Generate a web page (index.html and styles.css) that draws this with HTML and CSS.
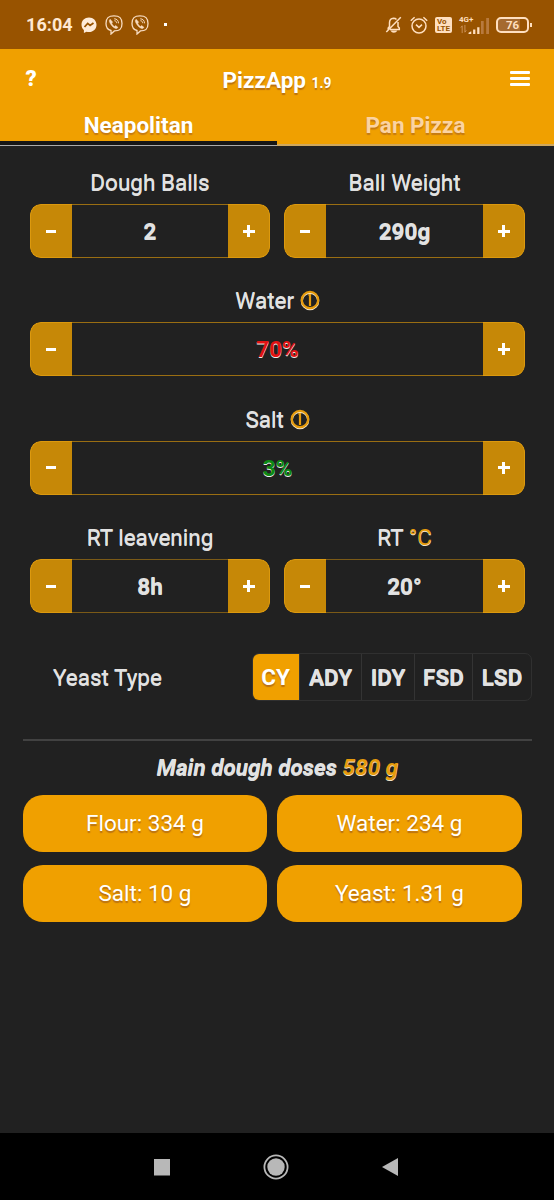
FILE: index.html
```html
<!DOCTYPE html>
<html lang="en">
<head>
<meta charset="utf-8">
<title>PizzApp</title>
<link rel="stylesheet" href="styles.css">
</head>
<body>
<div class="screen">
  <div class="status">
    <span class="clock">16:04</span>
    <svg class="messenger" width="16" height="17" viewBox="0 0 16 17"><path d="M8 .5C3.700.5.500 3.600.500 7.700c0 2.200.9 4 2.400 5.300v3l2.600-1.200c.8.2 1.600.3 2.500.3 4.300 0 7.500-3.100 7.500-7.300S12.300.5 8 .5z" fill="#ffecd9"/><path d="M3.500 10l3.200-3.600 2.400 2 3.400-2.400" fill="none" stroke="#985300" stroke-width="1.800"/></svg>
    <svg class="viber" width="18" height="20" viewBox="0 0 18 20"><use href="#viber"/></svg>
    <svg class="viber" width="18" height="20" viewBox="0 0 18 20"><g id="viber" fill="none" stroke="#f8dcc0" stroke-width="1.300"><path d="M9 .9c5.500 0 8 1.700 8 7.600s-2.500 7.400-7.600 7.400L6 19v-3.500C2.300 14.600 1 12.700 1 8.500 1 2.600 3.500.9 9 .9z"/><path d="M5.200 4.300c-1.400 1-1 2.300.2 4.400 1.300 2.300 3 3.900 5.300 4.800 1 .4 1.700-.3 2.200-1.200l-2.300-1.800-1 .9C8 10.700 7 9.300 6.700 8l1-.8z" fill="#f8dcc0" stroke-width=".5"/><path d="M9.200 3.800c2.700 0 4.300 1.800 4.300 4.500M9.400 5.700c1.500.1 2.300 1 2.300 2.500" stroke-width="1"/></g></svg>
    <i class="dot"></i>
    <svg class="bell" width="18" height="18" viewBox="0 0 18 18"><g fill="none" stroke="#ffdfbf" stroke-width="1.500"><path d="M3.200 13.500V12l1.300-1.500V6.800C4.500 4 6 2.400 8.500 2.200c1.300 0 2.300.4 3 1.200M13 6v4.500l1.300 1.500v1.500H5M1.300 16L15.800 1.200"/></g><path d="M5.500 14.500h6.800c-.8 1.600-1.900 2.200-3.400 2.200s-2.600-.6-3.400-2.200z" fill="#ffdfbf"/></svg>
    <svg class="alarm" width="18" height="18" viewBox="0 0 18 18"><g fill="none" stroke="#ffdfbf" stroke-width="1.500"><circle cx="9" cy="10" r="7"/><path d="M.8 4.800L4.600 1.300M17.200 4.800l-3.800-3.500M6 8.600l3 2.800 3-2.800"/></g></svg>
    <span class="volte"><b>Vo</b><b>LTE</b></span>
    <span class="cell">
      <b>4G+</b>
      <svg width="30" height="11" viewBox="0 0 30 11"><path d="M2 10V2M.5 4L2 2M5 1v8l1.500-2" fill="none" stroke="#d0955d" stroke-width="1"/><path d="M9 11V9.500L12 8v3zM14 11V6h2.500v5zM18.500 11V3.500H21V11z" fill="#ffdfbf"/></svg>
      <svg class="bars" width="8" height="16" viewBox="0 0 8 16"><path d="M0 16V3h2.700v13zM5.200 16V0H8v16z" fill="#b87a3e"/></svg>
    </span>
    <span class="battery">76</span>
  </div>

  <header class="header">
    <span class="help">?</span>
    <h1 class="title">PizzApp <small>1.9</small></h1>
    <span class="menu"><i></i><i></i><i></i></span>
  </header>
  <nav class="tabs">
    <span class="tab active">Neapolitan</span>
    <span class="tab">Pan Pizza</span>
  </nav>

  <main class="main">
    <div class="fields">
      <section class="field"><label>Dough Balls</label>
        <div class="stepper"><button class="minus"></button><output>2</output><button class="plus"></button></div></section>
      <section class="field"><label>Ball Weight</label>
        <div class="stepper"><button class="minus"></button><output>290g</output><button class="plus"></button></div></section>
      <section class="field wide"><label>Water <svg class="info" width="20" height="21" viewBox="0 0 20 21"><use href="#info"/></svg></label>
        <div class="stepper"><button class="minus"></button><output class="red">70%</output><button class="plus"></button></div></section>
      <section class="field wide"><label>Salt <svg class="info" width="20" height="21" viewBox="0 0 20 21"><g id="info" fill="none" stroke-width="2.200"><circle cx="10" cy="11" r="8.200" stroke="#f3e4c8"/><g stroke="#e69b0c"><circle cx="10" cy="10" r="8.200"/><path d="M10 4v12M8.500 5h2"/></g></g></svg></label>
        <div class="stepper"><button class="minus"></button><output class="green">3%</output><button class="plus"></button></div></section>
      <section class="field dim"><label>RT leavening</label>
        <div class="stepper"><button class="minus"></button><output>8h</output><button class="plus"></button></div></section>
      <section class="field dim"><label>RT <span class="accent">°C</span></label>
        <div class="stepper"><button class="minus"></button><output>20°</output><button class="plus"></button></div></section>
    </div>

    <div class="yeast">
      <span class="yeast-label">Yeast Type</span>
      <div class="segments">
        <span class="seg cy selected">CY</span><span class="seg ady">ADY</span><span class="seg idy">IDY</span><span class="seg fsd">FSD</span><span class="seg lsd">LSD</span>
      </div>
    </div>

    <h2 class="summary">Main dough doses <span class="accent">580 g</span></h2>
    <div class="doses">
      <span class="dose">Flour: 334 g</span><span class="dose">Water: 234 g</span>
      <span class="dose">Salt: 10 g</span><span class="dose">Yeast: 1.31 g</span>
    </div>
  </main>

  <div class="navbar">
    <svg width="18" height="18" viewBox="0 0 18 18"><rect x="1" y="1" width="16" height="16.500" fill="#b8b8b8"/></svg>
    <svg width="26" height="26" viewBox="0 0 26 26"><circle cx="13" cy="13" r="11.600" fill="none" stroke="#b8b8b8" stroke-width="1.800"/><circle cx="13" cy="13" r="8.700" fill="#b8b8b8"/></svg>
    <svg width="18" height="20" viewBox="0 0 18 20"><path d="M1 10L17 1v18z" fill="#b8b8b8"/></svg>
  </div>
</div>
</body>
</html>
```
FILE: styles.css
```css
* { box-sizing: border-box; }
body { margin: 0; background: #212121; font-family: Roboto, "Liberation Sans", sans-serif; }
.screen { width: 554px; height: 1200px; display: flex; flex-direction: column; background: #212121; color: #e2e2e2; overflow: hidden; }

.status { height: 49px; flex: none; display: flex; align-items: center; padding: 0 23px 0 26px; background: #985300; color: #ffdfbf; }
.clock { width: 55px; font-size: 18px; font-weight: 700; letter-spacing: .05px; line-height: 20px; padding-top: 1px; color: #ffe8d2; }
.messenger { margin: 1px 8px 0 0; }
.viber { margin-right: 8px; }
.dot { width: 3px; height: 3px; margin: 0 auto 0 7px; background: #fff; }
.bell { margin-right: 7px; }
.alarm { margin-right: 7px; }
.volte { width: 17px; height: 16px; margin-right: 7px; border-radius: 2px; background: #ffdfbf; color: #985300; font-size: 8px; line-height: 7px; padding: 1px 0 0 2px; }
.volte b { display: block; }
.cell { position: relative; width: 30px; height: 18px; display: flex; flex-direction: column; justify-content: space-between; font-size: 8px; line-height: 8px; margin-right: 7px; }
.bars { position: absolute; right: 0; bottom: 0; }
.battery { position: relative; width: 33px; height: 16px; margin-right: 2px; border: 2px solid #ffdfbf; border-radius: 5px; background: linear-gradient(90deg, #a56a30 75%, #985300 75%); font-size: 11.500px; font-weight: 700; line-height: 13px; text-align: center; }
.battery::after { content: ""; position: absolute; right: -5px; top: 4px; width: 2px; height: 4px; background: #ffdfbf; }

.header { height: 51px; flex: none; display: grid; grid-template-columns: 40px 1fr 40px; padding: 0 14px 0 11px; background: #f0a000; color: #fff; }
.help { font-size: 22px; font-weight: 900; line-height: 60px; text-align: center; }
.title { margin: 0; padding-left: 3px; font-size: 22.500px; font-weight: 700; line-height: 63px; text-align: center; text-shadow: 0 1.500px 1px #8a4a2088; }
.title small { font-size: 13.800px; }
.menu { display: flex; flex-direction: column; gap: 3px; padding: 22px 0 0 10px; }
.menu i { width: 20px; height: 3px; border-radius: 1px; background: #fff; }

.tabs { height: 46px; flex: none; display: grid; grid-template-columns: 1fr 1fr; background: #f0a000; }
.tab { font-size: 22.500px; font-weight: 700; line-height: 51px; height: 46px; text-align: center; color: #fbd3a2; text-shadow: 0 1.500px 1px #a05a2088; border-bottom: 2px solid #cfa75c; }
.tab.active { color: #fff; border-bottom: 0; background: linear-gradient(#161616 4px, #aaa 4px, #aaa 5px, #212121 5px) 0 100% / 100% 5px no-repeat; }

.main { flex: 1; padding: 23px 22px 0 23px; }
.fields { display: grid; grid-template-columns: 240px 241px; column-gap: 14px; row-gap: 29.400px; padding: 0 7px; }
.wide { grid-column: span 2; }
.field label { display: block; height: 35px; font-size: 22.500px; line-height: 26px; text-align: center; text-shadow: 0 1px 0 #ddd; }
.info { vertical-align: -3px; }
.accent { color: #e69b0c; text-shadow: 0 1px 0 #f3e4c8; }
.stepper { height: 54px; display: flex; border-radius: 11px; overflow: hidden; }
.stepper button { width: 42px; flex: none; border: 1px solid #dc990e; border-right: 0; border-radius: 11px 0 0 11px; padding: 0; background: #c68807; display: grid; place-items: center; }
.stepper .plus { border: 1px solid #dc990e; border-left: 0; border-radius: 0 11px 11px 0; }
.minus::before { content: ""; width: 10px; height: 3px; margin-right: 1px; background: #fff; }
.plus::before { content: ""; width: 12px; height: 12px; background: linear-gradient(#fff, #fff) center / 12px 3px no-repeat, linear-gradient(#fff, #fff) center / 3px 12px no-repeat; }
.stepper output { flex: 1; border: solid #9a6e12; border-width: 1px 0; font-size: 22.500px; font-weight: 700; line-height: 52px; text-align: center; text-shadow: 0 1px 0 #ddd; }
.dim .stepper output { border-color: #7b5a17; }
.stepper .red { color: #e21212; text-shadow: 0 1.200px 0 #eee; }
.stepper .green { color: #0c8a14; text-shadow: 0 1.200px 0 #eee; }

.yeast { height: 48px; margin-top: 39.800px; display: flex; justify-content: space-between; }
.yeast-label { padding-left: 30px; font-size: 22.500px; line-height: 48px; text-shadow: 0 1px 0 #ddd; }
.segments { display: flex; width: 280px; border: 1px solid #303030; border-radius: 7px; overflow: hidden; }
.seg { border-left: 1px solid #343434; font-size: 22.500px; font-weight: 700; line-height: 46px; text-align: center; text-shadow: 0 1px 0 #ddd; }
.cy { width: 46px; } .ady { width: 62px; } .idy { width: 53px; } .fsd { width: 58px; } .lsd { flex: 1; }
.segments .selected { border: 0; margin: -1px 0 -1px -1px; width: 47px; border-radius: 7px 0 0 7px; background: #f0a000; color: #fff; line-height: 48px; text-shadow: 0 1.500px 1px #8a4a2088; }

.summary { margin: 38px 0 0; padding-top: 12px; height: 56.500px; border-top: 2px solid #424242; font-size: 22.500px; font-weight: 700; font-style: italic; line-height: 28px; text-align: center; text-shadow: 0 1px 0 #ddd; }
.doses { display: grid; grid-template-columns: 244.500px 244.500px; grid-auto-rows: 57px; gap: 13px 10px; margin-left: -.3px; }
.dose { border-radius: 20px; background: #f0a000; color: #fff; font-size: 22.500px; line-height: 56px; text-align: center; text-shadow: 0 1.500px 1px #8a4a2088; }

.navbar { height: 67px; flex: none; background: #000; display: flex; align-items: center; justify-content: space-between; padding: 0 155px 0 153px; }
```
